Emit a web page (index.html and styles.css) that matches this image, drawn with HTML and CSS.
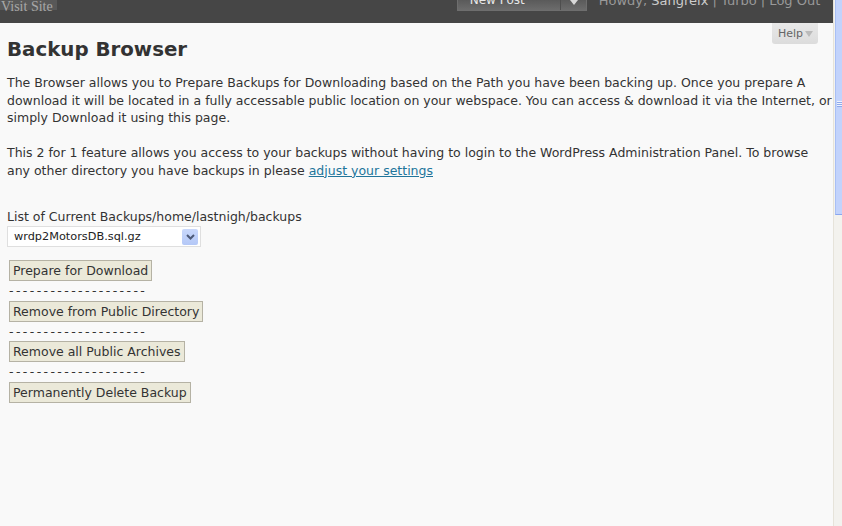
FILE: index.html
```html
<!DOCTYPE html>
<html>
<head>
<meta charset="utf-8">
<title>Backup Browser</title>
<link rel="stylesheet" href="styles.css">
</head>
<body>
<div class="window">
  <div class="page">
    <div class="header">
      <span class="visit">Visit Site</span>
      <span class="newpost"><span class="np-label">New Post</span><span class="np-sep"></span><span class="np-arrow"></span></span>
      <span class="howdy">Howdy, <span class="user">Sangreix</span> | Turbo | Log Out</span>
    </div>
    <div class="helpbar"><span class="help">Help<span class="help-arrow"></span></span></div>
    <div class="content">
      <h2 class="title">Backup Browser</h2>
      <p class="intro">The Browser allows you to Prepare Backups for Downloading based on the Path you have been backing up. Once you prepare A download it will be located in a fully accessable public location on your webspace. You can access &amp; download it via the Internet, or simply Download it using this page.<br><br>This 2 for 1 feature allows you access to your backups without having to login to the WordPress Administration Panel. To browse any other directory you have backups in please <a href="#" class="link">adjust your settings</a></p>
      <div class="listlabel">List of Current Backups/home/lastnigh/backups</div>
      <div class="select"><span class="sel-text">wrdp2MotorsDB.sql.gz</span><span class="sel-btn"><svg width="9" height="6" viewBox="0 0 9 6"><path d="M1 1 L4.5 4.5 L8 1" fill="none" stroke="#4d5a78" stroke-width="2"/></svg></span></div>
      <div class="actions">
        <button class="btn">Prepare for Download</button>
        <div class="dash">--------------------</div>
        <button class="btn">Remove from Public Directory</button>
        <div class="dash">--------------------</div>
        <button class="btn">Remove all Public Archives</button>
        <div class="dash">--------------------</div>
        <button class="btn">Permanently Delete Backup</button>
      </div>
    </div>
  </div>
  <div class="scrollbar">
    <div class="thumb"><span class="grip"></span></div>
    <div class="track"></div>
  </div>
</div>
</body>
</html>
```
FILE: styles.css
```css
html, body {
  margin: 0;
  padding: 0;
  height: 100%;
}
body {
  background: #f9f9f9;
  font-family: "DejaVu Sans", Verdana, sans-serif;
  color: #333;
  overflow: hidden;
}
.window {
  display: flex;
  height: 526px;
  width: 842px;
}
.page {
  flex: 1;
  display: flex;
  flex-direction: column;
  background: #f9f9f9;
  min-width: 0;
}
.header {
  height: 23px;
  background: #464646;
  display: flex;
  align-items: flex-start;
  overflow: hidden;
}
.visit {
  background: #585858;
  color: #a8a8a8;
  font-family: "Liberation Serif", serif;
  font-size: 14px;
  line-height: 14px;
  height: 10px;
  padding: 0 4px 0 1px;
  display: flex;
  align-items: flex-start;
}
.newpost {
  margin-left: 400px;
  width: 130px;
  height: 11px;
  background: linear-gradient(#5a5a5a, #6c6c6c);
  border: 1px solid #6e6e6e;
  border-top: 0;
  box-sizing: border-box;
  display: flex;
  align-items: flex-start;
  overflow: hidden;
}
.np-label {
  color: #e8e8e8;
  font-size: 12px;
  line-height: 12px;
  padding-left: 12px;
  width: 90px;
  margin-top: -6px;
  white-space: nowrap;
}
.np-sep {
  width: 1px;
  height: 11px;
  background: #4e4e4e;
}
.np-arrow {
  margin-left: 9px;
  width: 0;
  height: 0;
  border-left: 4px solid transparent;
  border-right: 4px solid transparent;
  border-top: 5px solid #d8d8d8;
}
.howdy {
  margin-left: 12px;
  color: #999;
  font-size: 13px;
  line-height: 13px;
  margin-top: -6px;
  white-space: nowrap;
}
.user {
  color: #ccc;
}
.helpbar {
  height: 0;
  position: relative;
}
.help {
  position: absolute;
  right: 15px;
  top: 0;
  width: 46px;
  height: 21px;
  box-sizing: border-box;
  background: linear-gradient(#e8e8e8, #dcdcdc);
  border-radius: 0 0 3px 3px;
  color: #666;
  font-size: 11px;
  display: flex;
  align-items: center;
  justify-content: center;
  gap: 2px;
  padding-left: 1px;
}
.help-arrow {
  width: 0;
  height: 0;
  border-left: 4px solid transparent;
  border-right: 4px solid transparent;
  border-top: 6px solid #bbb;
}
.content {
  padding: 0 0 0 7px;
}
.title {
  font-size: 19.8px;
  font-weight: bold;
  margin: 15px 0 0 0;
  line-height: 24px;
  color: #333;
}
.intro {
  font-size: 12.5px;
  line-height: 17.5px;
  margin: 12px 0 0 0;
}
.link {
  color: #21759b;
}
.listlabel {
  font-size: 12.5px;
  line-height: 15px;
  margin-top: 30px;
}
.select {
  margin-top: 2px;
  width: 194px;
  height: 21px;
  box-sizing: border-box;
  border: 1px solid #dfdfdf;
  background: #fff;
  display: flex;
  align-items: center;
  justify-content: space-between;
  padding: 0 2px 0 6px;
}
.sel-text {
  font-size: 11.3px;
  color: #222;
}
.sel-btn {
  width: 16px;
  height: 16px;
  background: linear-gradient(#c9d8fb, #b4c8f7);
  border-radius: 2px;
  display: flex;
  align-items: center;
  justify-content: center;
}
.actions {
  display: flex;
  flex-direction: column;
  align-items: flex-start;
  padding-left: 2px;
  margin-top: 13px;
}
.btn {
  font-family: "DejaVu Sans", Verdana, sans-serif;
  font-size: 12.5px;
  color: #333;
  background: #ebe9d9;
  border: 1px solid #b5b2a4;
  height: 21px;
  line-height: 17px;
  padding: 0 3px;
  margin: 0;
}
.dash {
  font-size: 12.5px;
  line-height: 20px;
  height: 19.7px;
  letter-spacing: 2.4px;
}
.scrollbar {
  width: 8px;
  display: flex;
  flex-direction: column;
  background: #f3f2ee;
  border-left: 1px solid #e6e3da;
}
.thumb {
  height: 214px;
  margin-left: 1px;
  background: #c2d3fc;
  border-left: 1px solid #a8bff5;
  border-bottom: 1px solid #8aa6ee;
  position: relative;
}
.grip {
  position: absolute;
  left: 1px;
  top: 101px;
  width: 6px;
  height: 6px;
  background: repeating-linear-gradient(#eef3ff 0 1px, #8ea9ea 1px 2px);
}
.track {
  flex: 1;
}
```
